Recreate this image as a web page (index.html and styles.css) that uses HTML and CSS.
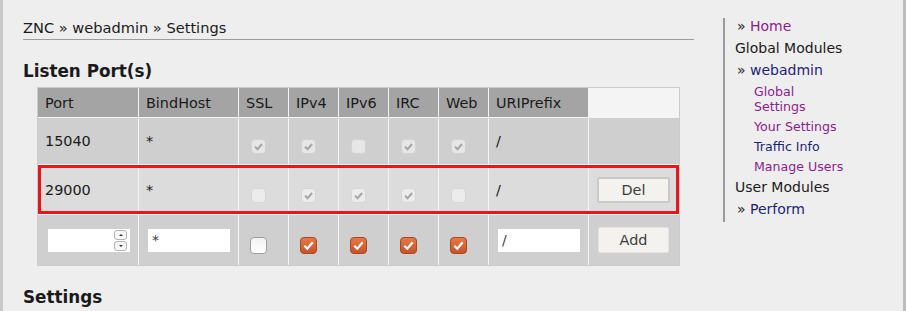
FILE: index.html
```html
<!DOCTYPE html>
<html>
<head>
<meta charset="utf-8">
<link rel="stylesheet" href="styles.css">
</head>
<body>
<svg class="defs" width="0" height="0" aria-hidden="true">
  <defs>
    <linearGradient id="og" x1="0" y1="0" x2="0" y2="1">
      <stop offset="0" stop-color="#e77a48"/>
      <stop offset="1" stop-color="#c4522b"/>
    </linearGradient>
    <linearGradient id="wg" x1="0" y1="0" x2="0" y2="1">
      <stop offset="0" stop-color="#f2f2f2"/>
      <stop offset="1" stop-color="#ffffff"/>
    </linearGradient>
  </defs>
</svg>
<div class="page">
  <div class="main">
    <div class="crumbs">ZNC » webadmin » Settings</div>
    <h2 class="title">Listen Port(s)</h2>
    <div class="ports">
      <div class="row head">
        <div class="c w-port">Port</div>
        <div class="c w-host">BindHost</div>
        <div class="c w-flag">SSL</div>
        <div class="c w-flag">IPv4</div>
        <div class="c w-flag">IPv6</div>
        <div class="c w-flag">IRC</div>
        <div class="c w-flag">Web</div>
        <div class="c w-uri">URIPrefix</div>
        <div class="c w-act"></div>
      </div>
      <div class="row r1">
        <div class="c w-port">15040</div>
        <div class="c w-host">*</div>
        <div class="c w-flag flag"><svg class="cb" viewBox="0 0 17 17"><rect x="1.5" y="1.5" width="14" height="14" rx="3.5" fill="#e7e7e7" stroke="#d3d3d3"/><path d="M5 8.6l2.5 2.6 4.6-5.2" fill="none" stroke="#a6a6a6" stroke-width="2"/></svg></div>
        <div class="c w-flag flag"><svg class="cb" viewBox="0 0 17 17"><rect x="1.5" y="1.5" width="14" height="14" rx="3.5" fill="#e7e7e7" stroke="#d3d3d3"/><path d="M5 8.6l2.5 2.6 4.6-5.2" fill="none" stroke="#a6a6a6" stroke-width="2"/></svg></div>
        <div class="c w-flag flag"><svg class="cb" viewBox="0 0 17 17"><rect x="1.5" y="1.5" width="14" height="14" rx="3.5" fill="#e7e7e7" stroke="#d3d3d3"/></svg></div>
        <div class="c w-flag flag"><svg class="cb" viewBox="0 0 17 17"><rect x="1.5" y="1.5" width="14" height="14" rx="3.5" fill="#e7e7e7" stroke="#d3d3d3"/><path d="M5 8.6l2.5 2.6 4.6-5.2" fill="none" stroke="#a6a6a6" stroke-width="2"/></svg></div>
        <div class="c w-flag flag"><svg class="cb" viewBox="0 0 17 17"><rect x="1.5" y="1.5" width="14" height="14" rx="3.5" fill="#e7e7e7" stroke="#d3d3d3"/><path d="M5 8.6l2.5 2.6 4.6-5.2" fill="none" stroke="#a6a6a6" stroke-width="2"/></svg></div>
        <div class="c w-uri">/</div>
        <div class="c w-act"></div>
      </div>
      <div class="row r2 marked">
        <div class="c w-port">29000</div>
        <div class="c w-host">*</div>
        <div class="c w-flag flag"><svg class="cb" viewBox="0 0 17 17"><rect x="1.5" y="1.5" width="14" height="14" rx="3.5" fill="#ececec" stroke="#d6d6d6"/></svg></div>
        <div class="c w-flag flag"><svg class="cb" viewBox="0 0 17 17"><rect x="1.5" y="1.5" width="14" height="14" rx="3.5" fill="#ececec" stroke="#d6d6d6"/><path d="M5 8.6l2.5 2.6 4.6-5.2" fill="none" stroke="#a6a6a6" stroke-width="2"/></svg></div>
        <div class="c w-flag flag"><svg class="cb" viewBox="0 0 17 17"><rect x="1.5" y="1.5" width="14" height="14" rx="3.5" fill="#ececec" stroke="#d6d6d6"/><path d="M5 8.6l2.5 2.6 4.6-5.2" fill="none" stroke="#a6a6a6" stroke-width="2"/></svg></div>
        <div class="c w-flag flag"><svg class="cb" viewBox="0 0 17 17"><rect x="1.5" y="1.5" width="14" height="14" rx="3.5" fill="#ececec" stroke="#d6d6d6"/><path d="M5 8.6l2.5 2.6 4.6-5.2" fill="none" stroke="#a6a6a6" stroke-width="2"/></svg></div>
        <div class="c w-flag flag"><svg class="cb" viewBox="0 0 17 17"><rect x="1.5" y="1.5" width="14" height="14" rx="3.5" fill="#ececec" stroke="#d6d6d6"/></svg></div>
        <div class="c w-uri">/</div>
        <div class="c w-act act"><button class="btn del" type="button">Del</button></div>
      </div>
      <div class="row r3">
        <div class="c w-port in-port">
          <div class="num">
            <input class="fld bare" type="text" value="">
            <span class="spin"><span class="sb up"></span><span class="sb dn"></span></span>
          </div>
        </div>
        <div class="c w-host in"><input class="fld" type="text" value="*"></div>
        <div class="c w-flag flag"><svg class="cb" viewBox="0 0 17 17"><rect x="0.5" y="0.5" width="16" height="16" rx="3.5" fill="url(#wg)" stroke="#9d9d9d"/></svg></div>
        <div class="c w-flag flag"><svg class="cb" viewBox="0 0 17 17"><rect x="0.5" y="0.5" width="16" height="16" rx="3.5" fill="url(#og)" stroke="#a9471f"/><path d="M4.3 8.7l3 3 5.4-6.4" fill="none" stroke="#fff" stroke-width="2.2"/></svg></div>
        <div class="c w-flag flag"><svg class="cb" viewBox="0 0 17 17"><rect x="0.5" y="0.5" width="16" height="16" rx="3.5" fill="url(#og)" stroke="#a9471f"/><path d="M4.3 8.7l3 3 5.4-6.4" fill="none" stroke="#fff" stroke-width="2.2"/></svg></div>
        <div class="c w-flag flag"><svg class="cb" viewBox="0 0 17 17"><rect x="0.5" y="0.5" width="16" height="16" rx="3.5" fill="url(#og)" stroke="#a9471f"/><path d="M4.3 8.7l3 3 5.4-6.4" fill="none" stroke="#fff" stroke-width="2.2"/></svg></div>
        <div class="c w-flag flag"><svg class="cb" viewBox="0 0 17 17"><rect x="0.5" y="0.5" width="16" height="16" rx="3.5" fill="url(#og)" stroke="#a9471f"/><path d="M4.3 8.7l3 3 5.4-6.4" fill="none" stroke="#fff" stroke-width="2.2"/></svg></div>
        <div class="c w-uri in"><input class="fld" type="text" value="/"></div>
        <div class="c w-act act"><button class="btn add" type="button">Add</button></div>
      </div>
    </div>
    <h2 class="title">Settings</h2>
  </div>
  <div class="side">
    <ul class="nav">
      <li class="itm">» <a class="v" href="#">Home</a></li>
      <li class="grp">Global Modules</li>
      <li class="itm">» <a class="n" href="#">webadmin</a>
        <ul class="sub">
          <li><a class="v" href="#">Global Settings</a></li>
          <li><a class="v" href="#">Your Settings</a></li>
          <li><a class="n" href="#">Traffic Info</a></li>
          <li><a class="v" href="#">Manage Users</a></li>
        </ul>
      </li>
      <li class="grp">User Modules</li>
      <li class="itm last">» <a class="n" href="#">Perform</a></li>
    </ul>
  </div>
</div>
</body>
</html>
```
FILE: styles.css
```css
body {
  margin: 0;
  font-family: "DejaVu Sans", "Liberation Sans", sans-serif;
  font-size: 14px;
  color: #1a1a1a;
  background: #eeeeee;
}

.defs {
  position: absolute;
  width: 0;
  height: 0;
}

.page {
  display: flex;
  height: 311px;
  box-sizing: border-box;
  border-left: 3px solid #c9c9c9;
  border-right: 3px solid #bdbdbd;
  overflow: hidden;
  background: #eeeeee;
}

.main {
  flex: none;
  width: 671px;
  margin-left: 20px;
  padding-top: 19px;
}

.crumbs {
  font-size: 14.6px;
  line-height: 17px;
  padding-bottom: 3px;
  border-bottom: 1px solid #9c9c9c;
}

.title {
  font-size: 16.8px;
  font-weight: bold;
  line-height: 20px;
  margin: 21px 0 6px 0;
}

.ports {
  margin-left: 14px;
  width: 643px;
  box-sizing: border-box;
  border: 1px solid #cbcbcb;
  background: #f4f4f4;
  display: flex;
  flex-direction: column;
  gap: 1px;
  font-size: 14.4px;
}

.row {
  display: flex;
  gap: 1px;
}

.c {
  flex: none;
  display: flex;
  align-items: center;
  box-sizing: border-box;
  padding-left: 7px;
}

.w-port { width: 100px; }
.w-host { width: 99px; }
.w-flag { width: 49px; }
.w-uri { width: 99px; }
.w-act { width: 90px; }

.head { height: 29px; }
.head .c { background: #a4a4a4; }
.head .w-act { background: transparent; }

.r1 { height: 46px; }
.r1 .c { background: #cfcfcf; }

.r2 { height: 49px; }
.r2 .c { background: #dcdcdc; }

.r3 { height: 50px; }
.r3 .c { background: #cfcfcf; }

.marked {
  outline: 3px solid #e8151c;
  outline-offset: -3px;
}

.flag { padding-left: 11px; }

.cb {
  display: block;
  width: 17px;
  height: 17px;
  margin-top: 11px;
}

.in { padding-left: 9px; }
.in-port { padding-left: 10px; }

.num {
  width: 82px;
  height: 23px;
  background: #ffffff;
  display: flex;
  align-items: center;
  padding-right: 3px;
  box-sizing: border-box;
}

.fld {
  width: 82px;
  height: 23px;
  box-sizing: border-box;
  border: 0;
  margin: 0;
  padding: 0 0 0 4px;
  background: #ffffff;
  font-family: "DejaVu Sans", sans-serif;
  font-size: 14px;
  color: #3a3a4a;
  outline: none;
}

.fld.bare {
  flex: 1;
  width: auto;
  min-width: 0;
}

.spin {
  display: flex;
  flex-direction: column;
  gap: 1px;
}

.sb {
  width: 13px;
  height: 10px;
  box-sizing: border-box;
  border: 1px solid #b4b4b4;
  border-radius: 3px;
  background: #f7f7f7;
  display: flex;
  align-items: center;
  justify-content: center;
}

.up::after {
  content: "";
  border-left: 2px solid transparent;
  border-right: 2px solid transparent;
  border-bottom: 2px solid #333;
}

.dn::after {
  content: "";
  border-left: 2px solid transparent;
  border-right: 2px solid transparent;
  border-top: 2px solid #333;
}

.act { padding-left: 8px; }

.btn {
  width: 73px;
  height: 26px;
  padding: 0;
  font-family: "DejaVu Sans", sans-serif;
  font-size: 14.4px;
  color: #3d3d3d;
  background: #f3f2ee;
  border: 2px solid #c9c9c9;
  border-radius: 2px;
}

.btn.add {
  width: 71px;
  margin-left: 1px;
  border: 1px solid #e2e2e2;
}

.side {
  flex: none;
  align-self: flex-start;
  width: 130px;
  margin-left: 29px;
  margin-top: 18px;
  border-left: 2px solid #9a9a9a;
  padding-bottom: 5px;
}

.nav {
  list-style: none;
  margin: 0;
  padding: 0;
}

.nav > li {
  line-height: 16px;
  margin-bottom: 6px;
}

.nav > li.last { margin-bottom: 0; }

.grp { padding-left: 10px; }
.itm { padding-left: 12px; }

.sub {
  list-style: none;
  width: 94px;
  margin: 6px 0 -1px 0;
  padding-left: 17px;
  font-size: 12.6px;
}

.sub li { line-height: 15px; }
.sub li + li { margin-top: 5px; }

a { text-decoration: none; }
.v { color: #8c1d8c; }
.n { color: #1e1e78; }
```
